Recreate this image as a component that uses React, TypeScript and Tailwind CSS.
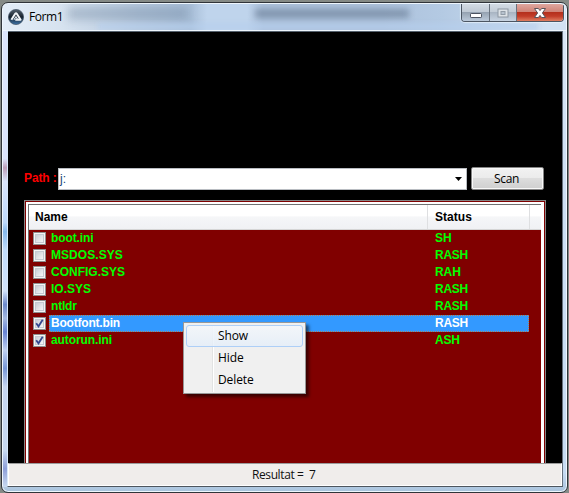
import React from "react";

type FileRow = {
  name: string;
  status: string;
  checked?: boolean;
  selected?: boolean;
  nameTracking: string;
  statusTracking: string;
};

const files: FileRow[] = [
  { name: "boot.ini", status: "SH", nameTracking: "tracking-[-0.1px]", statusTracking: "tracking-[-0.1px]" },
  { name: "MSDOS.SYS", status: "RASH", nameTracking: "tracking-[0.05px]", statusTracking: "tracking-[-0.25px]" },
  { name: "CONFIG.SYS", status: "RAH", nameTracking: "tracking-[0px]", statusTracking: "tracking-[-0.1px]" },
  { name: "IO.SYS", status: "RASH", nameTracking: "tracking-[0px]", statusTracking: "tracking-[-0.25px]" },
  { name: "ntldr", status: "RASH", nameTracking: "tracking-[-0.2px]", statusTracking: "tracking-[-0.25px]" },
  { name: "Bootfont.bin", status: "RASH", checked: true, selected: true, nameTracking: "tracking-[-0.2px]", statusTracking: "tracking-[-0.25px]" },
  { name: "autorun.ini", status: "ASH", checked: true, nameTracking: "tracking-[-0.1px]", statusTracking: "tracking-[-0.2px]" },
];

const bold = "font-['Liberation_Sans',Arial,sans-serif] text-[12px] font-bold whitespace-pre";
const segoe = "font-['Open_Sans','Noto_Sans',sans-serif] text-[12px] whitespace-pre";

function AppIcon() {
  return (
    <svg width="16" height="16" viewBox="0 0 16 16" className="shrink-0">
      <defs>
        <linearGradient id="orb" x1="0" y1="0" x2="0" y2="1">
          <stop offset="0" stopColor="#53606d" />
          <stop offset="0.5" stopColor="#17222d" />
          <stop offset="1" stopColor="#3d74aa" />
        </linearGradient>
      </defs>
      <circle cx="8" cy="8" r="7.6" fill="url(#orb)" stroke="#3f5062" strokeWidth="0.7" />
      <path d="M3.4 10.7 L7.2 4.8 Q8 3.8 8.8 4.8 L12.6 10.7 H7.3" fill="none" stroke="#f2f5f8" strokeWidth="2" strokeLinejoin="round" />
      <path d="M5.9 10.8 L8 7.8 L9.6 10.4" fill="none" stroke="#dfe6ed" strokeWidth="1.1" />
    </svg>
  );
}

function CaptionButtons() {
  return (
    <div className="flex h-[18px] w-[103px] shrink-0 overflow-hidden rounded-b-[4px] border border-t-0 border-[#4c5663] shadow-[0_0_1px_1px_rgba(240,248,255,0.65)]">
      <div className="flex w-[28px] items-center justify-center border-r border-[#68727e] bg-[linear-gradient(#d3dbe4_0%,#bfc9d4_46%,#96a3b2_50%,#bccada_100%)]">
        <svg width="14" height="16" viewBox="0 0 14 16">
          <rect x="1.5" y="8.5" width="11" height="4" rx="0.7" fill="#fff" stroke="#4c5360" />
        </svg>
      </div>
      <div className="flex w-[27px] items-center justify-center border-r border-[#68727e] bg-[linear-gradient(#d3dbe4_0%,#c2ccd6_46%,#a9b5c3_50%,#c8d4e2_100%)]">
        <svg width="12" height="14" viewBox="0 0 12 14">
          <rect x="1" y="3" width="10" height="8" fill="#dde2e7" stroke="#8e98a3" strokeWidth="1" />
          <rect x="4" y="5.5" width="4" height="3" fill="#b8c3cf" stroke="#929ca7" />
        </svg>
      </div>
      <div className="flex flex-1 items-center justify-center bg-[linear-gradient(#dfa79f_0%,#cf8377_46%,#b5301d_50%,#c23d29_72%,#df7d60_100%)]">
        <svg width="14" height="16" viewBox="0 0 14 16">
          <path d="M1.5 3.5 H5.4 L7 5.6 L8.6 3.5 H12.5 L9.4 8 L12.5 12.5 H8.6 L7 10.4 L5.4 12.5 H1.5 L4.6 8 Z" fill="#fff" stroke="#59535a" strokeWidth="1" strokeLinejoin="round" />
        </svg>
      </div>
    </div>
  );
}

function TitleBar() {
  return (
    <header className="relative flex h-[27px] shrink-0 justify-between overflow-hidden border-b border-[#edf5fc] bg-[linear-gradient(90deg,#e3edf7_0px,#d6e2ef_60px,#b8cadf_135px,#a9bfd8_188px,#bfd4ec_204px,#bfd4ec_244px,#adc2dc_260px,#adc2dc_380px,#b4cae3_440px,#d1e1f3_545px)]">
      <div className="absolute top-[3px] left-[65px] h-[13px] w-[120px] bg-[#637b96]/35 blur-[4px]" />
      <div className="absolute top-[5px] left-[252px] h-[9px] w-[154px] bg-[#4b6078]/45 blur-[3px]" />
      <div className="absolute top-[19px] left-[95px] h-[7px] w-[440px] bg-[#b5cfee]/60 blur-[2px]" />
      <div className="relative flex pt-[5px] pl-[5px]">
        <AppIcon />
        <span className={segoe + " ml-[5px] h-[16px] leading-[16px] tracking-[-0.45px] text-black"}>Form1</span>
      </div>
      <div className="relative mr-[2px] flex">
        <CaptionButtons />
      </div>
    </header>
  );
}

function Checkbox({ checked }: { checked?: boolean }) {
  return (
    <span className="ml-[4px] flex h-[13px] w-[13px] shrink-0 border border-[#8e8f8f] bg-[#f4f4f4] p-px">
      <span className="flex h-[9px] w-[9px] border border-[#c5cad2] bg-[linear-gradient(135deg,#c9ced5,#f6f6f6)]">
        {checked && (
          <svg width="9" height="9" viewBox="0 0 9 9" className="-m-px shrink-0">
            <path d="M1.2 4.2 L3.5 7.3 L7.7 0.8" fill="none" stroke="#34478f" strokeWidth="1.8" />
          </svg>
        )}
      </span>
    </span>
  );
}

function FileList() {
  return (
    <section className="ml-[16px] flex h-[263px] w-[522px] border border-b-0 border-[#858585] bg-[#800000] px-px pt-px">
      <div className="flex flex-1 border-t-2 border-r-[3px] border-l-2 border-white">
        <div className="flex flex-1 flex-col border-t border-l border-[#707070]">
          <div className={bold + " flex h-[25px] shrink-0 items-center border-b border-[#d5d5d5] bg-[linear-gradient(#ffffff_0%,#ffffff_45%,#f5f6f8_50%,#f0f1f4_100%)] text-black"}>
            <div className="flex h-full w-[399px] items-center border-r border-[#dedfe1] pl-[6px]">Name</div>
            <div className="flex h-full w-[102px] items-center border-r border-[#dedfe1] pl-[7px] tracking-[0.05px]">Status</div>
          </div>
          {files.map((file) => (
            <div key={file.name} className={"flex h-[17px] shrink-0 items-center " + (file.selected ? "text-white" : "text-[#00ff00]")}>
              <Checkbox checked={file.checked} />
              <div className={bold + " ml-[3px] flex h-[17px] w-[480px] items-center " + (file.selected ? "border border-dotted border-[#b07a50] bg-[#3399ff]" : "border border-transparent")}>
                <span className={"ml-px w-[384px] leading-[15px] " + file.nameTracking}>{file.name}</span>
                <span className={"leading-[15px] " + file.statusTracking}>{file.status}</span>
              </div>
            </div>
          ))}
        </div>
      </div>
    </section>
  );
}

function ContextMenu() {
  return (
    <div className={segoe + " absolute top-[322px] left-[183px] flex h-[72px] w-[123px] flex-col border border-[#979797] bg-[#f0f0f0] p-[2px] text-black shadow-[3px_3px_3px_rgba(0,0,0,0.55)]"}>
      <div className="absolute top-[3px] bottom-[1px] left-[28px] w-[2px] border-l border-[#e2e3e3] bg-white" />
      <div className="relative flex h-[22px] items-center rounded-[3px] border border-[#aecff7] bg-[linear-gradient(rgba(243,246,250,0.9),rgba(228,238,249,0.8))] pl-[31px] tracking-[-0.15px]">Show</div>
      <div className="relative flex h-[22px] items-center pl-[32px] tracking-[-0.1px]">Hide</div>
      <div className="relative flex h-[22px] items-center pl-[32px] tracking-[-0.1px]">Delete</div>
    </div>
  );
}

export default function App() {
  return (
    <div className="relative flex h-[493px] w-[569px] flex-col overflow-hidden bg-[#858a86]">
      <div className="mt-[2px] ml-px flex h-[491px] w-[567px] flex-col rounded-[7px] border border-[#303439] bg-[linear-gradient(180deg,#dce8f5_0%,#cfe0f4_30%,#c6dbf2_96%,#a9c3dc_100%)] shadow-[inset_0_0_0_1px_#eef6fd]">
        <div className="mx-px mt-px flex shrink-0 flex-col overflow-hidden rounded-t-[6px]">
          <TitleBar />
        </div>
        <div className="flex flex-1">
          <div className="ml-px h-[456px] w-[4px] bg-[linear-gradient(#dce4fb_0%,#dbe4fb_28%,#bc9fb9_30%,#dae5fb_33%,#bed9fa_42%,#86b9eb_44%,#c1dcfa_48%,#d2e3fa_57%,#6d8acb_60%,#a4b9df_63%,#6884d4_66%,#bfd0ef_70%,#7797d7_74%,#c6d5ef_78%,#c8d9f0_92%,#8d9fd9_96%,#c9daf0_100%)]" />
          <div className="flex h-[456px] w-[556px] flex-col border border-t-0 border-[#d7e8fa] border-r-[#65717d] border-b-[#4e565e] bg-black">
            <main className="flex h-[432px] shrink-0 flex-col border-t border-[#55616d]">
              <div className="mt-[135px] ml-[16px] flex h-[23px] items-center">
                <div className={bold + " w-[34px] pb-px tracking-[-0.1px] text-[#ff0000]"}>Path :</div>
                <div className="flex h-[22px] w-[409px] items-center justify-between border border-[#b9bdc2] bg-white pr-[4px] pl-px">
                  <span className="font-['Liberation_Sans',Arial,sans-serif] text-[12px] leading-[16px] text-[#174578]">j:</span>
                  <svg width="7" height="4" viewBox="0 0 7 4"><path d="M0 0 H7 L3.5 4 Z" fill="#000" /></svg>
                </div>
                <button className={segoe + " ml-[4px] flex h-[23px] w-[73px] items-center justify-center rounded-[2px] border border-[#858585] bg-[linear-gradient(#f2f2f2_0%,#ebebeb_48%,#dddddd_50%,#cfcfcf_100%)] pr-[2px] tracking-[-0.4px] text-black shadow-[inset_0_0_0_1px_#f8f8f8]"}>Scan</button>
              </div>
              <div className="mt-[10px] flex"><FileList /></div>
            </main>
            <footer className={segoe + " flex h-[23px] shrink-0 items-center border border-[#ffffff] border-t-[#9b9b9b] bg-[#f0edeb] pl-[243px] tracking-[-0.4px] text-[#101010]"}>Resultat =  7</footer>
          </div>
        </div>
      </div>
      <ContextMenu />
    </div>
  );
}
